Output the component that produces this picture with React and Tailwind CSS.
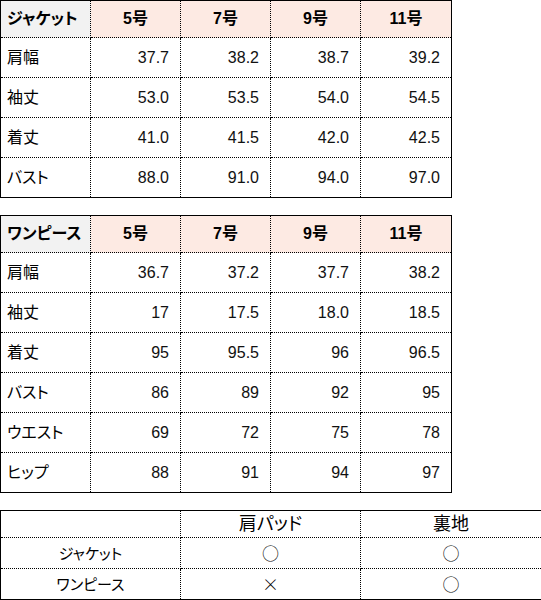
import React from 'react';

const jacket = {
  title: 'ジャケット',
  rows: [
    ['肩幅', '37.7', '38.2', '38.7', '39.2'],
    ['袖丈', '53.0', '53.5', '54.0', '54.5'],
    ['着丈', '41.0', '41.5', '42.0', '42.5'],
    ['バスト', '88.0', '91.0', '94.0', '97.0'],
  ],
};

const onepiece = {
  title: 'ワンピース',
  rows: [
    ['肩幅', '36.7', '37.2', '37.7', '38.2'],
    ['袖丈', '17', '17.5', '18.0', '18.5'],
    ['着丈', '95', '95.5', '96', '96.5'],
    ['バスト', '86', '89', '92', '95'],
    ['ウエスト', '69', '72', '75', '78'],
    ['ヒップ', '88', '91', '94', '97'],
  ],
};

const sizes = ['5号', '7号', '9号', '11号'];

const cell = 'border border-dotted border-black p-0';
const mark = "[font-family:'Noto_Sans_CJK_JP',sans-serif] [font-feature-settings:normal] text-[17px] font-light";

function SizeTable({ data }) {
  return (
    <table className="table-fixed border-collapse w-[451px] border border-black">
      <colgroup>
        <col className="w-[90px]" />
        <col className="w-[90px]" />
        <col className="w-[90px]" />
        <col className="w-[90px]" />
        <col className="w-[91px]" />
      </colgroup>
      <thead>
        <tr className="h-[37px]">
          <th className={`${cell} bg-[#f2f2f2] text-left pl-[6px] font-bold`}>{data.title}</th>
          {sizes.map((s) => (
            <th key={s} className={`${cell} bg-[#fdeae3] text-center font-bold`}>{s}</th>
          ))}
        </tr>
      </thead>
      <tbody>
        {data.rows.map((r) => (
          <tr key={r[0]} className="h-[40px]">
            <td className={`${cell} text-left pl-[6px]`}>{r[0]}</td>
            {r.slice(1).map((v, i) => (
              <td key={i} className={`${cell} text-right pr-[11px] text-[#111]`}>{v}</td>
            ))}
          </tr>
        ))}
      </tbody>
    </table>
  );
}

export default function App() {
  return (
    <div className="bg-white w-[541px] h-[600px] overflow-hidden text-black text-[16px] leading-none [font-family:'Liberation_Sans','Noto_Sans_CJK_JP',sans-serif] [font-feature-settings:'palt']">
      <SizeTable data={jacket} />
      <div className="h-[17px]" />
      <SizeTable data={onepiece} />
      <div className="h-[17px]" />
      <table className="table-fixed border-collapse w-[541px] border border-black text-[15px]">
        <colgroup>
          <col className="w-[180px]" />
          <col className="w-[180px]" />
          <col className="w-[181px]" />
        </colgroup>
        <tbody>
          <tr className="h-[27px]">
            <td className={cell}></td>
            <td className={`${cell} text-center text-[18px]`}>肩パッド</td>
            <td className={`${cell} text-center text-[18px]`}>裏地</td>
          </tr>
          <tr className="h-[31px]">
            <td className={`${cell} text-center`}>ジャケット</td>
            <td className={`${cell} text-center`}><span className={mark}>○</span></td>
            <td className={`${cell} text-center`}><span className={mark}>○</span></td>
          </tr>
          <tr className="h-[31px]">
            <td className={`${cell} text-center`}>ワンピース</td>
            <td className={`${cell} text-center`}><span className={mark}>×</span></td>
            <td className={`${cell} text-center`}><span className={mark}>○</span></td>
          </tr>
        </tbody>
      </table>
    </div>
  );
}
